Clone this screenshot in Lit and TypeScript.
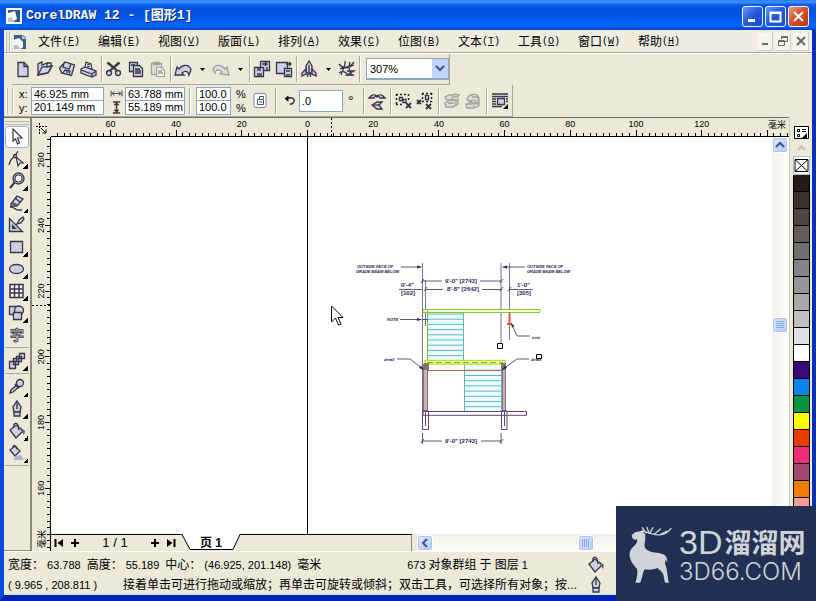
import { LitElement, html, svg, css, TemplateResult } from "lit";
import { customElement, state } from "lit/decorators.js";

type Glyph = TemplateResult;

const glyphs: Record<string, Glyph> = {
  fresh: svg`<path class="f" d="M4 2.500h6l4 4v10H4z"/><path class="l" d="M10 2.500v4h4"/>`,
  open: svg`<path class="f" d="M2 15V4l4-2v3l5-2v4l5-1-4 7z"/><path class="l" d="M2 15l4-8 10-1-4 7zM11 3h4v3"/>`,
  save: svg`<path class="f" d="M1.500 8L7 2l9.500 3-3 10.500-10-2.500z"/><path class="l" d="M6 3l-1 4 6 2 2-5M5 13l2-3 5 1-1 3"/><path class="d" d="M8 11h2v2H8z"/>`,
  print: svg`<path class="w" d="M5 8l1-6 5 2 1 5z"/><path class="f" d="M1 9l4-2 11 4v4l-4 2-11-4z"/><path class="l" d="M1 10l11 4 4-3M12 14v3M7 4l3 1M7 6l3 1"/>`,
  cut: svg`<path class="l" d="M2 3l10 8M3 2l9 8M15 3L5 11M14 2L5 10"/><circle class="f" cx="4" cy="13" r="2.500"/><circle class="f" cx="13" cy="13" r="2.500"/>`,
  copy: svg`<path class="f" d="M2.500 2.500h8v9h-8z"/><path class="f" d="M6.500 5.500h6l3 3v8h-9z"/><path class="l" d="M8 9h5M8 11h6M8 13h6M4 5h4"/>`,
  paste: svg`<g class="faint"><path class="f" d="M2.500 3.500h10v11h-10zM5 2.500h5v2H5z"/><path class="w" d="M7.500 7.500h5l3 3v6h-8z"/><path class="l" d="M9 11h4M9 13h5"/></g>`,
  undo: svg`<path class="f" d="M1 15l2-8 2 2c3-4 10-6 12 1l-2 5c-1-5-5-4-7-2l2 2z"/>`,
  redo: svg`<g class="faint"><path class="f" d="M17 15l-2-8-2 2C10 5 3 3 1 10l2 3c1-4 5-4 7-1l-2 2z"/></g>`,
  import: svg`<path class="f" d="M7.500 1.500h9v9h-9z"/><path class="f" d="M1.500 7.500h9v9h-9z"/><path class="d" d="M4 8h4v3H4zM4 13h5v3H4z"/><path class="l" d="M9 4h5M12 2l2 2-2 2M14 7v3"/>`,
  export: svg`<path class="f" d="M1.500 2.500h11v11h-11z"/><path class="f" d="M9.500 8.500h7v8h-7z"/><path class="l" d="M11 4h5M14 2l2 2-2 2"/><path class="d" d="M11 10h4v2h-4zM11 14h4v2h-4z"/>`,
  launch: svg`<path class="f" d="M6 13V6l3-5 3 5v7z"/><path class="f" d="M6 9l-4 4v3l4-2zM12 9l4 4v3l-4-2z"/><path class="l" d="M9 5v10M7.500 14v3M10.500 14v3"/>`,
  online: svg`<path class="l" d="M1 4c4 5 9 6 15-2M2 9c5-3 9-1 14-4M3 15C5 9 8 5 7 1M12 2c-2 5-1 9 2 14M1 13c5-3 9 0 8 3M9 11h7l-7 4h7"/>`,
  mirror: svg`<path class="f" d="M1 6c3-4 5-4 8-2 3-2 5-2 8 2h-5c-1-2-2-2-3-1-1-1-2-1-3 1z"/><path class="f" d="M14 10H9l-5 3 5 4h5l-3-4z"/><path class="l" d="M4 13h7"/>`,
  ungroup: svg`<path class="dot" d="M1 2.500h12M1 12.500h8M1.500 2v11M13.500 2v6"/><path class="l" d="M4.500 5.500h3v3h-3zM8 7.500h3v3H8z"/><path class="l thick" d="M11 11l5 5M16 11l-5 5"/>`,
  ungroupAll: svg`<path class="dot" d="M6 1.500h10M6 9.500h10M6.500 1v9M15.500 1v9"/><path class="l" d="M9.500 3.500h3v4h-3z"/><path class="l thick" d="M1 8l4 4M5 8l-4 4M10 12l5 5M15 12l-5 5"/>`,
  convert: svg`<g class="faint"><path class="f" d="M2 5l4-2h5l1-1 4 1-2 2h-4l-2 3h5v5l-3 2H3l-1-4 3-2z"/><path class="l" d="M4 8h8M5 11h6M12 9l3-2v5l-3 2"/></g>`,
  convert2: svg`<g class="faint"><path class="f" d="M3 8c1-6 10-8 12-2v8l-5 2H3l-1-4h5V9z"/><path class="l" d="M8 5h6v6H8M4 11c4-2 6 0 6 4M6 9c4-2 7 0 7 4"/></g>`,
  wrap: svg`<path class="l" d="M1 2h16M1 4.500h16M1 7h4M1 9.500h4M1 12h4M1 14.500h10M15 7h2M15 9.500h2"/><path class="f" d="M6.500 6.500h7v6h-7z"/><path class="k" d="M17 12v5h-5z"/>`,
  lock: svg`<rect class="pad" x="3" y="1.500" width="12" height="14" rx="2"/><path class="thin" d="M6.500 7.500h6v5h-6zM8.500 7V4.500h4V7M8 10h3"/>`,
  rotate: svg`<path class="l thick" d="M6 5h5c5 1 4 8-2 8"/><path class="k" d="M2 6l5-4v8z"/>`,
  wide: svg`<path class="l" d="M1.500 5v8M16.500 5v8M3 9h12M6 6L3 9l3 3M12 6l3 3-3 3"/>`,
  tall: svg`<path class="l thick" d="M4 1.500h10M4 16.500h10M9 3v12M6 6l3-3 3 3M6 12l3 3 3-3"/>`,
  pick: svg`<path class="w" d="M5 1l9 9H9.500l2 5-2 1-2-5L5 13z"/>`,
  shape: svg`<path class="l" d="M1 15c1-5 3-7 6-9L10 1M7 6c2 3 3 5 4 9"/><path class="w" d="M8 7l7 6h-3l-2 3z"/><circle class="f" cx="7" cy="6" r="1.500"/>`,
  zoom: svg`<path class="l thick" d="M7 10l-5 6"/><circle class="f" cx="10.500" cy="6.500" r="5.500"/><circle class="w" cx="10.500" cy="6.500" r="3.500"/>`,
  freehand: svg`<path class="f" d="M3 10l6-8 6 3-6 7-6 1z"/><path class="d" d="M5 8l6 3-3 2H3z"/><path class="l" d="M7 4l5 4M2 13c4-1 5 4 9 3h3"/>`,
  smart: svg`<path class="f" d="M1.500 2.500v13h13z"/><path class="w" d="M4.500 9.500v3h3z"/><path class="f" d="M9 8l2-4 4-3 1 2-3 4z"/>`,
  rect: svg`<path class="f" d="M2.500 3.500h12v11h-12z"/>`,
  ellipse: svg`<ellipse class="f" cx="8.500" cy="9" rx="7" ry="4.500"/>`,
  grid: svg`<path class="w thick" d="M2 2.500h13v13H2zM2 7h13M2 11h13M6.500 2.500v13M11 2.500v13"/>`,
  basic: svg`<path class="f" d="M1.500 2.500h8v8h-8z"/><circle class="f" cx="11" cy="6.500" r="4.500"/><path class="f" d="M5.500 8.500h8v7h-8z"/>`,
  text: svg`<text class="word" x="9" y="14" text-anchor="middle">字</text>`,
  blend: svg`<path class="f" d="M11.500 1.500h5v5h-5zM8.500 4.500h5v5h-5zM5.500 6.500h5v6h-5zM1.500 9.500h6v7h-6z"/>`,
  dropper: svg`<path class="f" d="M2 15l1-3 6-5 2 2-6 5z"/><circle class="f" cx="12" cy="5" r="3.500"/><path class="l thick" d="M7 6l4 4"/>`,
  pen: svg`<path class="f" d="M9 1l4 6-1 5H6L5 7z"/><path class="l" d="M9 1v8"/><path class="f" d="M6 12h6v4H6z"/>`,
  bucket: svg`<path class="f" d="M2 8l6-5 7 6-7 7z"/><path class="d" d="M12 5l5 4-1 4-2-3z"/><path class="l" d="M6 6c-1-5 2-6 4-3l1 5"/>`,
  interactive: svg`<path class="f" d="M2 6l5-4 5 5-5 5z"/><path class="l" d="M5 4c0-4 3-3 4 1"/><path class="s" d="M7 12l6-1 3 5H6z"/>`,
};

const icon = (name: string) =>
  html`<svg class="icon" viewBox="0 0 18 18" aria-hidden="true">${glyphs[name]}</svg>`;

const menus = [
  ["文件", "F"], ["编辑", "E"], ["视图", "V"], ["版面", "L"], ["排列", "A"], ["效果", "C"],
  ["位图", "B"], ["文本", "T"], ["工具", "O"], ["窗口", "W"], ["帮助", "H"],
];

const tools: { name: string; fly?: boolean; rule?: boolean }[] = [
  { name: "pick" }, { name: "shape", fly: true }, { name: "zoom", fly: true },
  { name: "freehand", fly: true }, { name: "smart" }, { name: "rect", fly: true },
  { name: "ellipse", fly: true }, { name: "grid", fly: true }, { name: "basic", fly: true },
  { name: "text", rule: true }, { name: "blend", fly: true, rule: true },
  { name: "dropper", fly: true }, { name: "pen", fly: true }, { name: "bucket", fly: true },
  { name: "interactive", fly: true, rule: true },
];

const swatches = [
  "#201c1a", "#38322f", "#4d4744", "#625d5a", "#6f716f", "#838483", "#959796", "#a9a9a8",
  "#c0c0bf", "#dce0de", "#ffffff", "#3a0a78", "#0a84e8", "#0a9446", "#ffff00", "#ea3a00",
  "#ee2c78", "#a04870", "#f07c00", "#f59a98",
];

/* 20 mm on either ruler */
const STEP = 65.7;

const rulerX = (origin: number) => {
  const parts = [];
  for (let n = -38; n <= 160; n++) {
    const x = origin + (n * STEP) / 10;
    const major = n % 10 === 0;
    parts.push(svg`<line x1=${x} x2=${x} y1=${major ? 12 : 15} y2="18"/>`);
    if (major && n < 70) {
      parts.push(svg`<text x=${x} y="9" text-anchor="middle">${Math.abs(n * 2)}</text>`);
    }
  }
  return parts;
};

const rulerY = (origin: number) => {
  const parts = [];
  for (let n = -3; n <= 130; n++) {
    const y = origin + (n * STEP) / 10;
    const major = n % 10 === 0;
    parts.push(svg`<line y1=${y} y2=${y} x1=${major ? 13 : 15} x2="18"/>`);
    if (major && n < 60) {
      parts.push(
        svg`<text transform=${`translate(12 ${y}) rotate(-90)`} text-anchor="middle">${260 - n * 2}</text>`
      );
    }
  }
  return parts;
};

const rungs = (x1: number, x2: number, from: number, count: number) =>
  Array.from({ length: count }, (_, i) => {
    const y = from + i * 5.2;
    return svg`<line x1=${x1} x2=${x2} y1=${y} y2=${y}/>`;
  });

const plan = html`<svg class="plan" viewBox="345 255 240 200" role="img" aria-label="CAD">
  <g class="teal">
    <rect x="427.500" y="312.500" width="36" height="48"/>
    ${rungs(427.5, 463.5, 314, 9)}
    <rect x="464.500" y="363.500" width="37" height="48"/>
    ${rungs(464.5, 501.5, 370.3, 8)}
  </g>
  <path class="grey" d="M422.500 263v150M425.500 280v46M501 263v81M509.500 263v77"/>
  <path class="beam" d="M423 309.500h117v3H423z"/>
  <path class="green" d="M427.500 309v52"/>
  <path class="lime" d="M425 360.500h80v3.500h-80z"/>
  <path class="green" stroke-dasharray="6 3" d="M427 362.500h76"/>
  <path class="red" d="M427 370.500h75"/>
  <path class="post" d="M509.500 312v12M507 324h5"/>
  <path class="brown" d="M423.500 364h4v47h-4zM502.500 364h3v47h-3z"/>
  <path class="block" d="M424 363h5v7h-5zM501 363h5v7h-5z"/>
  <path class="purple" d="M423 411.500h103.500v3.800H423zM422.500 411h6v18.500h-6zM501.500 411h5.500v18.500h-5.500zM425.500 411v15M504.500 411v15M422 319.500h6"/>
  <path class="ink" d="M401 267h20M525 267h-22M422 281h20M480 281h21M426 289.500h17M482 289.500h20M399 289.500h23M509 289.500h24M400 319.500h21M512 325l5 11h13M397 359h13l13 10M529 359h-12l-14 10M422.500 433v11M501 433v11M422.500 441H442M481 441h20M421 283l3-4M500 283l3-4M424 291l3-4M500 291l3-4M508 291l3-4M421 443l3-4M500 443l3-4"/>
  <path class="head" d="M422 267l-5-1.500v3zM502 267l5-1.500v3zM422 319.500l-5-1.500v3zM511 323l3.500 3-2.500 1.500zM424 370l-5-2 2-2.500zM502 370l5-2-2-2.500z"/>
  <g class="tiny">
    <text x="357" y="268">OUTSIDE FACE OF</text><text x="356" y="273">GRADE BEAM BELOW</text>
    <text x="527" y="268">OUTSIDE FACE OF</text><text x="527" y="273">GRADE BEAM BELOW</text>
    <text x="387" y="321">NOTE</text><text x="532" y="339">note</text>
    <text x="384" y="361">detail</text><text x="531" y="361">detail</text>
  </g>
  <g class="dim">
    <text x="445" y="283">9'-0" [2743]</text><text x="447" y="291">8'-8" [2642]</text>
    <text x="401" y="287">0'-4"</text><text x="401" y="295">[102]</text>
    <text x="517" y="287">1'-0"</text><text x="517" y="295">[305]</text>
    <text x="445" y="443">9'-0" [2743]</text>
  </g>
  <path class="handle" d="M497.500 343.500h5v5h-5zM536.500 354.500h5v4h-5z"/>
</svg>`;

@customElement("app-root")
export class AppRoot extends LitElement {
  @state() private tool = "pick";

  static styles = css`
    :host {
      display: block;
      height: 100vh;
      min-height: 560px;
      position: relative;
      overflow: hidden;
      box-sizing: border-box;
      font: 12px/16px "Liberation Sans", "Noto Sans CJK SC", sans-serif;
      color: #000;
    }
    * { box-sizing: border-box; }
    button, input, select { font: inherit; color: inherit; margin: 0; padding: 0; }
    button { border: 0; background: none; display: flex; align-items: center; justify-content: center; flex: none; }
    svg { display: block; flex: none; }

    .window {
      height: 100%;
      display: grid;
      grid-template-columns: minmax(0, 1fr);
      grid-template-rows: 30px 23px 32px 33px minmax(0, 1fr) 44px;
      background: #ece9d8;
      border: solid #0831b8;
      border-width: 0 4px 6px 4px;
      border-left-color: #0a48dc;
      border-bottom-color: #0424b0;
    }
    .title {
      margin: 0 -4px;
      padding: 2px 7px 0 6px;
      display: flex;
      align-items: center;
      gap: 4px;
      color: #fff;
      background: linear-gradient(#2a7cf0 0, #3a93ff 2px, #0a5ae8 5px, #0450dc 10px, #0558ea 18px, #0664ff 25px, #0458e8 28px, #0338b8 30px);
    }
    .title h1 {
      flex: 1;
      margin: 0;
      font: bold 13px/20px "Liberation Mono", "Noto Sans CJK SC", monospace;
      text-shadow: 1px 1px 0 #082a80;
    }
    .caption { display: flex; gap: 2px; }
    .caption button {
      width: 21px; height: 21px;
      border: 1px solid #e8f0ff;
      border-radius: 3px;
      background: linear-gradient(135deg, #6a98f4, #2458dc 50%, #1c4cd0);
    }
    .caption .close { background: linear-gradient(135deg, #ee9a80, #d84c28 50%, #b83818); }
    .cap { width: 17px; height: 17px; fill: none; stroke: #fff; stroke-width: 2; }

    .menu {
      display: flex;
      align-items: center;
      padding: 1px 3px 0 9px;
      border-bottom: 1px solid #aca899;
      box-shadow: 0 1px #fff;
      background: linear-gradient(90deg, #ece9d8, #efede2);
    }
    .doc { width: 14px; height: 16px; margin-left: 3px; }
    .menu nav { display: flex; flex: 1; margin-left: 11px; }
    .menu nav button { width: 60px; justify-content: flex-start; }
    .key { font: 10px/16px "Liberation Mono", monospace; }
    .key u { text-underline-offset: 1px; }
    .mdi { display: flex; gap: 2px; }
    .mdi button { width: 16px; height: 18px; background: #f5f4ee; border-right: 1px solid #d4d0c0; border-bottom: 1px solid #d4d0c0; }
    .mdi svg { width: 10px; height: 10px; fill: none; stroke: #6c6a62; stroke-width: 2; }

    .bar { display: flex; align-items: center; }
    .bar.standard { padding: 1px 0 0 8px; }
    .bar.property { border-bottom: 1px solid #716f64; margin-right: 23px; }
    .strip { display: flex; align-items: center; height: 100%; border-right: 1px solid #aca899; border-bottom: 1px solid #aca899; }
    .grip { width: 6px; height: 26px; border: solid #bdb9a8; border-width: 0 1px; box-shadow: 1px 0 #fff, -1px 0 #fff; flex: none; }
    .grip.menu-grip { width: 4px; height: 20px; margin-left: -7px; }
    .standard button { width: 22px; height: 24px; }
    .standard .drop { width: 16px; }
    .sep { width: 1px; height: 26px; background: #aca899; box-shadow: 1px 0 #fff; flex: none; margin: 0 1px; }
    .zoom { display: flex; position: relative; margin-left: 5px; }
    .zoom select { appearance: none; width: 83px; height: 22px; padding-left: 3px; font-size: 11px; border: 2px solid #8ca8c0; border-width: 1px 1px 2px; border-radius: 0; background: #fff; }
    .zoom svg { position: absolute; right: 1px; top: 1px; width: 16px; height: 19px; background: #c1d3f8; fill: none; stroke: #3c5480; stroke-width: 2; pointer-events: none; }

    .icon { width: 18px; height: 18px; overflow: visible; }
    .f { fill: #cfcfe4; stroke: #37374a; stroke-width: 1.3; }
    .w { fill: #fafaff; stroke: #37374a; stroke-width: 1.2; }
    .l { fill: none; stroke: #37374a; stroke-width: 1.3; }
    .thin { fill: none; stroke: #4c5470; }
    .d { fill: #5c5c74; }
    .s { fill: #b4b4d0; }
    .k { fill: #000; }
    .pad { fill: #fff; stroke: #7088a8; }
    .thick { stroke-width: 2; }
    .w.thick { stroke-width: 1.5; }
    .dot { fill: none; stroke: #222; stroke-width: 1.5; stroke-dasharray: 2 2; }
    .faint { opacity: .4; }
    .word { font: bold 14px "Noto Sans CJK SC", sans-serif; fill: #e4e4f0; stroke: #37374a; stroke-width: .8; }

    .property .grip { margin: 0 6px 0 3px; }
    .pair { display: flex; flex-direction: column; }
    .pair label, .pair > span { display: flex; align-items: center; height: 14px; font-size: 11px; line-height: 14px; }
    .pair label > span { width: 12px; }
    .pair .tag { width: 15px; display: flex; }
    .pair .icon { width: 13px; height: 13px; }
    .pair input, .angle input { font-size: 11px; background: #fff; border: 1px solid #8ca8c0; border-radius: 0; padding-left: 2px; height: 14px; min-width: 0; }
    .pair label + label input { margin-top: -1px; height: 15px; }
    .pos input { width: 73px; }
    .size { margin-left: 6px; }
    .size input { width: 60px; }
    .scale { margin-left: 2px; }
    .scale input { width: 35px; }
    .signs { margin: 0 5px; width: 10px; }
    .angle { display: flex; align-items: center; gap: 2px; margin-right: 5px; }
    .angle .icon { width: 14px; height: 14px; }
    .angle input { width: 44px; height: 22px; }
    .angle > span { margin-left: 3px; font-size: 14px; }
    .property .sep { margin: 0 4px; }
    .property button { width: 18px; height: 22px; }
    .property .space { margin-right: 3px; }
    .property .after-lock { margin: 0 7px 0 6px; }

    .work {
      display: grid;
      grid-template-columns: 28px 19px minmax(0, 1fr) 17px 23px;
      grid-template-rows: 19px minmax(0, 1fr) 17px;
    }
    .toolbox { grid-row: 1 / -1; border: solid #8a887c; border-width: 0 2px 1px 0; display: flex; flex-direction: column; align-items: center; padding-top: 3px; }
    .toolgrip { width: 24px; height: 4px; border: solid #bdb9a8; border-width: 1px 0; margin-bottom: 1px; flex: none; }
    .tool { position: relative; width: 24px; height: 22px; padding-right: 1px; border-radius: 3px; }
    .tool.on { background: #fff; border: 1px solid #98b5c8; }
    .tool.fly::after { content: ""; position: absolute; right: 1px; bottom: 1px; width: 5px; height: 5px; background: linear-gradient(135deg, transparent 50%, #000 50%); }
    .rule { width: 24px; height: 1px; background: #aca899; margin: 1px 0 2px; flex: none; }
    .corner { padding: 5px 0 0 4px; }
    .corner svg { width: 11px; height: 11px; fill: none; stroke: #000; }
    .ruler { width: 100%; height: 100%; overflow: hidden; font-size: 9px; stroke-width: 1; shape-rendering: crispEdges; }
    .ruler line { stroke: #000; }
    .rx { grid-column: 3 / 5; border-bottom: 1px solid #000; }
    .ry { grid-column: 2; grid-row: 2 / 4; border-right: 1px solid #000; }
    .canvas { grid-column: 3; grid-row: 2; background: #fff; position: relative; overflow: hidden; min-width: 0; }
    .page-edge { position: absolute; left: 256px; top: 0; bottom: 0; width: 1px; background: #000; }
    .plan { position: absolute; left: 294px; top: 118px; width: 240px; height: 200px; fill: none; }
    .pointer { position: absolute; left: 280px; top: 168px; width: 13px; height: 21px; fill: #fff; stroke: #000; }
    .teal { stroke: #5cb8c0; stroke-width: 1; fill: #effcfc; }
    .grey { stroke: #77738c; }
    .green { stroke: #68c040; }
    .beam { stroke: #80c83c; fill: #fcffd0; }
    .lime { stroke: #c4dc28; fill: #fbffd8; stroke-width: 1.5; }
    .red { stroke: #c0604c; }
    .post { stroke: #d85c30; stroke-width: 2; }
    .brown { stroke: #8c6c80; fill: #ccb0a8; }
    .block { fill: #77786c; }
    .purple { stroke: #604478; }
    .ink { stroke: #30305c; stroke-width: .8; }
    .head { fill: #28285c; }
    .tiny { fill: #18184e; font: italic bold 4px "Liberation Sans", sans-serif; }
    .dim { fill: #28285c; font: bold 6px "Liberation Sans", sans-serif; }
    .handle { fill: #fff; stroke: #000; }

    .vscroll { grid-column: 4; grid-row: 2 / 4; display: flex; flex-direction: column; align-items: center; background: linear-gradient(90deg, #f1efe8, #fefefb); border-right: 1px solid #fff; }
    .hscroll { flex: 1; display: flex; align-items: center; background: linear-gradient(#f1efe8, #fefefb); }
    .sb { width: 16px; height: 16px; border-radius: 3px; border: 1px solid #fff; background: linear-gradient(135deg, #dce8ff, #b4ccf8); box-shadow: inset 0 0 0 1px #b0c4ec; }
    .sb svg { width: 12px; height: 12px; fill: none; stroke: #3c5480; stroke-width: 2; }
    .sb .ridges { stroke: #8caae0; stroke-width: 1; }
    .vscroll .before { flex: 43; }
    .vscroll .after { flex: 57; }
    .hscroll .before { flex: 9; }
    .hscroll .after { flex: 11; }

    .bottom { grid-column: 3; grid-row: 3; display: flex; min-width: 0; }
    .pages { width: 361px; flex: none; display: flex; align-items: center; border-top: 1px solid #000; border-right: 1px solid #8a887c; margin-right: 5px; }
    .pages button { width: 16px; height: 16px; }
    .pages .nav svg { width: 10px; height: 10px; stroke: #000; stroke-width: 2; }
    .count { width: 64px; text-align: center; font-size: 13px; }
    .tab { position: relative; margin: -1px 0 0 3px; }
    .pages .tab { width: 58px; }
    .tab svg { position: absolute; left: 0; top: -1px; width: 58px; height: 17px; fill: #fff; stroke: #000; }
    .tab span { position: relative; font-weight: bold; }

    .palette { grid-column: 5; grid-row: 1 / -1; border-left: 1px solid #d0ccbc; display: flex; flex-direction: column; align-items: center; overflow: hidden; padding: 6px 0 0 1px; }
    .palette button { width: 17px; }
    .palette svg { width: 15px; height: 15px; fill: none; stroke: #000; }
    .palette .more { height: 16px; }
    .palette .up { height: 16px; }
    .palette .up svg { stroke: #c4c0b0; stroke-width: 2; }
    .palette .none { height: 19px; border: 1px solid #a8c4d4; background: #fff; }
    .palette .swatch { height: 17px; border: solid #000; border-width: 0 1px 1px; }

    .status { display: flex; flex-direction: column; gap: 3px; padding: 4px 0 0 4px; border-top: 1px solid #fff; border-bottom: 2px solid #d8e8e8; overflow: hidden; white-space: nowrap; }
    .line { display: flex; height: 17px; align-items: center; }
    .fact { display: flex; gap: 3px; margin-right: 6px; }
    .num { font-size: 11px; }
    .what { margin-left: 86px; display: flex; gap: 3px; width: 180px; }
    .where { width: 115px; }
    .hint { width: 464px; }

    .mark { position: absolute; right: 0; bottom: 0; width: 200px; height: 95px; background: #223054; color: #d0d3d8; display: flex; align-items: center; padding: 2px 8px 0 11px; gap: 3px; overflow: hidden; }
    .deer { width: 49px; height: 62px; fill: #d0d3d8; }
    .deer .antler { fill: none; stroke: #d0d3d8; stroke-width: 4; stroke-linecap: round; }
    .brand { display: flex; flex-direction: column; gap: 2px; white-space: nowrap; }
    .big { display: flex; align-items: center; height: 32px; font: bold 27px/32px "Noto Sans CJK SC", sans-serif; }
    .big b { font: 34px/32px "Liberation Sans", sans-serif; margin-right: 2px; }
    .site { font: 300 24px/24px Inter, "Liberation Sans", sans-serif; }
  `;

  private sep() {
    return html`<span class="sep"></span>`;
  }

  private drop() {
    return html`<button class="drop" aria-label="▾"><svg width="5" height="3" viewBox="0 0 5 3"><path d="M0 0h5L2.500 3z" /></svg></button>`;
  }

  private buttons(...names: string[]) {
    return names.map((n) => html`<button aria-label=${n}>${icon(n)}</button>`);
  }

  private titleBar() {
    return html`<header class="title">
      <svg width="16" height="16" viewBox="0 0 16 16"><path fill="#fff" d="M0 0h16v16H0z"/><path fill="#285c80" d="M2 2h12v12H2z"/><path fill="#fff" d="M2 5l7-2 2 8-5 3-4-1z"/><path fill="#b8c4cc" d="M2 10l4-1 2 5H2z"/></svg>
      <h1>CorelDRAW 12 - [图形1]</h1>
      <div class="caption">
        <button aria-label="minimize"><svg class="cap" viewBox="0 0 17 17"><path stroke-width="3" d="M4 12.500h7"/></svg></button>
        <button aria-label="maximize"><svg class="cap" viewBox="0 0 17 17"><path d="M3.500 4.500h10v9h-10zM3 5h11"/></svg></button>
        <button class="close" aria-label="close"><svg class="cap" viewBox="0 0 17 17"><path d="M4 4l9 9M13 4l-9 9"/></svg></button>
      </div>
    </header>`;
  }

  private menuBar() {
    return html`<div class="menu">
      <span class="grip menu-grip"></span>
      <svg class="doc" viewBox="0 0 14 16"><path fill="#3c5c84" d="M1 1h9l3 3v11H1z"/><path fill="#c8d4e4" d="M9 1l4 4H9z"/><path fill="#f4f8fc" d="M0 6l6-2 4 4v5l-4 3-5-1z"/><path fill="#b0bcd0" d="M1 11h4l2 4H1z"/></svg>
      <nav>
        ${menus.map(([name, key]) => html`<button>${name}<span class="key">(<u>${key}</u>)</span></button>`)}
      </nav>
      <div class="mdi">
        <button aria-label="minimize document"><svg viewBox="0 0 10 10"><path d="M2 8h6"/></svg></button>
        <button aria-label="restore document"><svg viewBox="0 0 10 10"><path stroke-width="1" d="M3.500 3V.500h6v5H7M.500 4.500h6v5h-6zM3 1.500h6M1 5.500h5"/></svg></button>
        <button aria-label="close document"><svg viewBox="0 0 10 10"><path d="M1 1l8 8M9 1L1 9"/></svg></button>
      </div>
    </div>`;
  }

  private standardBar() {
    return html`<div class="bar standard"><div class="strip">
      ${this.buttons("fresh", "open", "save", "print")}${this.sep()}
      ${this.buttons("cut", "copy", "paste")}${this.sep()}
      ${this.buttons("undo")}${this.drop()}${this.buttons("redo")}${this.drop()}${this.sep()}
      ${this.buttons("import", "export")}${this.sep()}
      ${this.buttons("launch")}${this.drop()}${this.buttons("online")}${this.sep()}
      <div class="zoom">
        <select aria-label="缩放"><option>307%</option></select>
        <svg viewBox="0 0 16 19"><path d="M4 7l4 4 4-4"/></svg>
      </div>
    </div></div>`;
  }

  private propertyBar() {
    return html`<div class="bar property"><div class="strip">
      <span class="grip"></span>
      <div class="pair pos">
        <label><span>x:</span><input value="46.925 mm" /></label>
        <label><span>y:</span><input value="201.149 mm" /></label>
      </div>
      <div class="pair size">
        <label><span class="tag">${icon("wide")}</span><input aria-label="宽度" value="63.788 mm" /></label>
        <label><span class="tag">${icon("tall")}</span><input aria-label="高度" value="55.189 mm" /></label>
      </div>
      ${this.sep()}
      <div class="pair scale">
        <label><input aria-label="x %" value="100.0" /></label>
        <label><input aria-label="y %" value="100.0" /></label>
      </div>
      <div class="pair signs"><span>%</span><span>%</span></div>
      ${this.buttons("lock")}
      <span class="sep after-lock"></span>
      <label class="angle">${icon("rotate")}<input aria-label="旋转" value=".0" /><span>°</span></label>
      ${this.sep()}${this.buttons("mirror")}${this.sep()}
      ${this.buttons("ungroup")}<span class="space"></span>${this.buttons("ungroupAll")}${this.sep()}
      ${this.buttons("convert")}<span class="space"></span>${this.buttons("convert2")}${this.sep()}
      ${this.buttons("wrap")}<span class="space"></span>
    </div></div>`;
  }

  private toolbox() {
    return html`<div class="toolbox">
      <span class="toolgrip"></span>
      ${tools.map(
        (t) => html`<button
            class="tool ${t.fly ? "fly" : ""} ${this.tool === t.name ? "on" : ""}"
            aria-label=${t.name}
            @click=${() => (this.tool = t.name)}
          >${icon(t.name)}</button>${t.rule ? html`<span class="rule"></span>` : ""}`
      )}
    </div>`;
  }

  private pages() {
    return html`<div class="bottom">
      <div class="pages">
        <button class="nav" aria-label="first"><svg viewBox="0 0 10 10"><path d="M1.500 1v8"/><path stroke="none" d="M9 1v8L3.500 5z"/></svg></button>
        <button class="nav" aria-label="add before"><svg viewBox="0 0 10 10"><path d="M1 5h8M5 1v8"/></svg></button>
        <span class="count">1 / 1</span>
        <button class="nav" aria-label="add after"><svg viewBox="0 0 10 10"><path d="M1 5h8M5 1v8"/></svg></button>
        <button class="nav" aria-label="last"><svg viewBox="0 0 10 10"><path d="M8.500 1v8"/><path stroke="none" d="M1 1v8l5.500-4z"/></svg></button>
        <button class="tab"><svg viewBox="0 0 58 17"><path stroke="none" d="M0 0h58l-8 16H9z"/><path fill="none" d="M0 .500L8 15.500h43L58 .500"/></svg><span>页 1</span></button>
      </div>
      <div class="hscroll">
        <button class="sb" aria-label="left"><svg viewBox="0 0 12 12"><path d="M8 2L4 6l4 4"/></svg></button>
        <span class="before"></span>
        <button class="sb" aria-label="horizontal thumb"><svg class="ridges" viewBox="0 0 12 12"><path d="M2.500 2v8M4.500 2v8M6.500 2v8M8.500 2v8"/></svg></button>
        <span class="after"></span>
      </div>
    </div>`;
  }

  private status() {
    return html`<footer class="status">
      <div class="line">
        <span class="fact">宽度：<span class="num">63.788</span></span>
        <span class="fact">高度：<span class="num">55.189</span></span>
        <span class="fact">中心：<span class="num">(46.925, 201.148)</span></span>
        <span>毫米</span>
        <span class="what"><span class="num">673</span><span>对象群组</span><span>于</span><span>图层</span><span class="num">1</span></span>
        ${icon("bucket")}
      </div>
      <div class="line">
        <span class="where num">( 9.965 , 208.811 )</span>
        <span class="hint">接着单击可进行拖动或缩放；再单击可旋转或倾斜；双击工具，可选择所有对象；按...</span>
        ${icon("pen")}
      </div>
    </footer>`;
  }

  private watermark() {
    return html`<aside class="mark">
      <svg class="deer" viewBox="90 100 147 186">
        <path d="M104 133l12-9 14-2 10-4-1 8 6 4c-1 5 1 13-1 22-3 14-2 22 10 28 16 8 34 4 48 12 7 5 9 12 9 24l-5-10c-3 14-1 16 3 28l5 36 2 6h-12l-5-24c-3-9-11-13-18-20-10 5-26 6-37 4-4 3-6 12-8 20l-6 20h-15c4-11 8-30 5-42-10-10-20-22-22-38-2-18 8-25 17-34 5-6 6-9 5-16-6 2-11 1-14-4z"/>
        <path class="antler" d="M134 122c6-4 15 6 30 7 16 6 42 7 58-16M146 126l-10-15M156 128l-6-18M158 128l10-17M172 131l18-16M190 132l20-11"/>
      </svg>
      <div class="brand">
        <div class="big"><b>3D</b>溜溜网</div>
        <div class="site">3D66.COM</div>
      </div>
    </aside>`;
  }

  render() {
    return html`
      <div class="window">
        ${this.titleBar()} ${this.menuBar()} ${this.standardBar()} ${this.propertyBar()}
        <main class="work">
          ${this.toolbox()}
          <div class="corner"><svg viewBox="0 0 11 11"><path stroke-dasharray="2 1" d="M0 3.500h11M3.500 0v11"/><path d="M5 5l5 5M10 6.500v3.500H6.500"/></svg></div>
          <svg class="ruler rx">
            ${rulerX(256.5)}
            <line x1="280.500" x2="280.500" y1="0" y2="18" stroke-dasharray="2 2"/>
            <svg x="100%" overflow="visible"><text x="-3" y="10" text-anchor="end">毫米</text></svg>
          </svg>
          <svg class="ruler ry">
            ${rulerY(22.7)}
            <line y1="168.500" y2="168.500" x1="0" x2="18" stroke-dasharray="2 2"/>
            <svg y="100%" overflow="visible"><text transform="translate(13 -3) rotate(-90)">毫米</text></svg>
          </svg>
          <div class="canvas">
            <span class="page-edge"></span>
            ${plan}
            <svg class="pointer" viewBox="0 0 13 21"><path d="M.500 1v16l4-4 3 7 2.500-1-3-6.500h5z"/></svg>
          </div>
          <div class="vscroll">
            <button class="sb" aria-label="up"><svg viewBox="0 0 12 12"><path d="M2 8l4-4 4 4"/></svg></button>
            <span class="before"></span>
            <button class="sb" aria-label="vertical thumb"><svg class="ridges" viewBox="0 0 12 12"><path d="M2 2.500h8M2 4.500h8M2 6.500h8M2 8.500h8"/></svg></button>
            <span class="after"></span>
          </div>
          ${this.pages()}
          <div class="palette">
            <button class="more" aria-label="palette"><svg viewBox="0 0 15 15"><path fill="#fff" d="M.500 1.500h14v12H.500z"/><path d="M3.500 4.500h2v2h-2zM3.500 9.500h2v2h-2zM8 4.500h4M8 6.500h4"/><path fill="#000" stroke="none" d="M13 8v5H8z"/></svg></button>
            <button class="up" aria-label="palette up"><svg viewBox="0 0 15 15"><path d="M4 9l3.500-3.500L11 9"/></svg></button>
            <button class="none" aria-label="no colour"><svg viewBox="0 0 15 15"><path d="M1 1.500h13v12H1zM1 1.500l13 12M14 1.500L1 13.500"/></svg></button>
            ${swatches.map((c) => html`<button class="swatch" aria-label=${c} style="background:${c}"></button>`)}
          </div>
        </main>
        ${this.status()}
      </div>
      ${this.watermark()}
    `;
  }
}
